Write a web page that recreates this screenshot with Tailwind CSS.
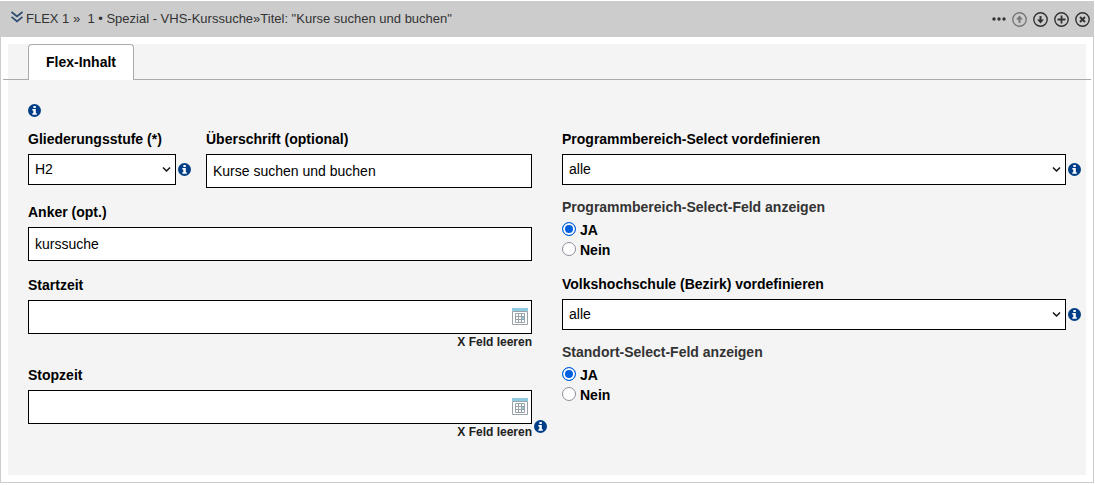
<!DOCTYPE html>
<html lang="de">
  <head>
    <meta charset="UTF-8" />
    <title>Flex-Inhalt</title>
    <meta name="viewport" content="width=device-width, initial-scale=1" />
    <script src="https://cdn.jsdelivr.net/npm/@tailwindcss/browser@4"></script>
  </head>
  <body class="bg-white font-['Liberation_Sans',Arial,sans-serif] text-sm text-black">

    <!-- shared icons -->
    <svg class="hidden">
      <symbol id="info" viewBox="0 0 12 12">
        <circle cx="6" cy="6" r="6" fill="#003f87" />
        <path d="M5 1.800h2.200v1.900H5zM4 4.600h3.200v3.900h.9V10H4V8.500h.9V6H4z" fill="#fff" />
      </symbol>
      <symbol id="calendar" viewBox="0 0 16 17">
        <path d="M0 0h16v3H0z" fill="#8fcbe0" />
        <path d="M.5 3.500h15v13H.5z" fill="#fff" stroke="#98a2a8" />
        <path d="M10 9h2v2h-2z" fill="#8fcbe0" />
        <path d="M3.500 5.500h9v9h-9zM6.500 5.500v9M9.500 5.500v9M3.500 8.500h9M3.500 11.500h9" fill="none" stroke="#98a2a8" />
      </symbol>
    </svg>

    <div class="mt-px mr-px border border-t-0 border-[#ccc]">
      <header class="flex h-9 items-center justify-between bg-[#ccc] pl-[10px] pr-[3px] text-[13px] text-[#333]">
        <div class="flex items-center gap-[3px]">
          <svg class="mb-1 h-3 w-3" viewBox="0 0 12 12" fill="none" stroke="#2b4a6f" stroke-width="1.700">
            <path d="M.5 1L6 5.500 11.500 1M.5 5.800L6 10.300l5.500-4.500" />
          </svg>
          <h1 class="whitespace-pre">FLEX 1 »  1 • Spezial - VHS-Kurssuche»Titel: "Kurse suchen und buchen"</h1>
        </div>
        <div class="flex items-center gap-[6px]">
          <button type="button" aria-label="Mehr">
            <svg class="h-[15px] w-[14px]" viewBox="0 0 14 15" fill="#333">
              <circle cx="2" cy="7" r="1.700" /><circle cx="7" cy="7" r="1.700" /><circle cx="12" cy="7" r="1.700" />
            </svg>
          </button>
          <button type="button" aria-label="Nach oben" class="text-[#777]">
            <svg class="size-[15px]" viewBox="0 0 15 15" fill="none" stroke="currentColor" stroke-width="1.400">
              <circle cx="7.500" cy="7.500" r="6.700" />
              <path d="M7.500 11V5" stroke-width="2" /><path d="M4 7.500L7.500 3.600 11 7.500z" fill="currentColor" stroke="none" />
            </svg>
          </button>
          <button type="button" aria-label="Nach unten">
            <svg class="size-[15px]" viewBox="0 0 15 15" fill="none" stroke="currentColor" stroke-width="1.400">
              <circle cx="7.500" cy="7.500" r="6.700" />
              <path d="M7.500 4v6" stroke-width="2" /><path d="M4 7.500l3.500 3.900L11 7.500z" fill="currentColor" stroke="none" />
            </svg>
          </button>
          <button type="button" aria-label="Hinzufügen">
            <svg class="size-[15px]" viewBox="0 0 15 15" fill="none" stroke="currentColor" stroke-width="1.400">
              <circle cx="7.500" cy="7.500" r="6.700" />
              <path d="M7.500 3.500v8M3.500 7.500h8" stroke-width="1.800" />
            </svg>
          </button>
          <button type="button" aria-label="Löschen">
            <svg class="size-[15px]" viewBox="0 0 15 15" fill="none" stroke="currentColor" stroke-width="1.400">
              <circle cx="7.500" cy="7.500" r="6.700" />
              <path d="M5 5l5 5M10 5l-5 5" stroke-width="2" />
            </svg>
          </button>
        </div>
      </header>

      <div class="mx-[7px] mt-[7px] mb-[7px] bg-[#f4f4f4]">
        <nav class="-mx-[5px] flex border-b border-[#aaa] pl-[25px]">
          <a href="#flex" class="-mb-px rounded-t border border-b-0 border-[#aaa] bg-white px-[17px] pt-[7px] pb-2 leading-5 font-bold">Flex-Inhalt</a>
        </nav>

        <form id="flex" class="pt-6 pb-[35px] pl-5">
          <svg class="mb-3 size-[13px]"><use href="#info" /></svg>

          <div class="grid grid-cols-2 gap-[10px]">
            <div>
              <div class="mb-[14px] flex pr-5">
                <div class="w-[178px]">
                  <label for="stufe" class="mb-[5px] block leading-5 font-bold">Gliederungsstufe (*)</label>
                  <div class="flex items-center gap-[2px]">
                    <div class="relative w-[148px]">
                      <select id="stufe" class="block h-[31px] w-full appearance-none border border-black bg-white px-[6px] pb-[2px]">
                        <option>H2</option>
                      </select>
                      <svg class="pointer-events-none absolute top-3 right-[5px] h-[7px] w-[9px]" viewBox="0 0 9 7" fill="none" stroke="#111" stroke-width="1.500"><path d="M1 1.500l3.500 3.500L8 1.500" /></svg>
                    </div>
                    <svg class="size-[13px]"><use href="#info" /></svg>
                  </div>
                </div>
                <div class="flex-1">
                  <label for="titel" class="mb-[5px] block leading-5 font-bold">Überschrift (optional)</label>
                  <input id="titel" type="text" value="Kurse suchen und buchen" class="block h-[34px] w-full border border-black bg-white px-[6px]" />
                </div>
              </div>

              <div class="mb-[14px] pr-5">
                <label for="anker" class="mb-[5px] block leading-5 font-bold">Anker (opt.)</label>
                <input id="anker" type="text" value="kurssuche" class="block h-[34px] w-full border border-black bg-white px-[6px]" />
              </div>

              <div class="mb-[15px] pr-5">
                <label for="start" class="mb-[5px] block leading-5 font-bold">Startzeit</label>
                <div class="relative">
                  <input id="start" type="text" class="block h-[34px] w-full border border-black bg-white px-[6px]" />
                  <svg class="absolute top-2 right-1 h-[17px] w-4"><use href="#calendar" /></svg>
                </div>
                <button type="button" class="ml-auto block text-xs font-bold text-[#222]">X Feld leeren</button>
              </div>

              <div>
                <label for="stop" class="mb-[5px] block leading-5 font-bold">Stopzeit</label>
                <div class="relative mr-5">
                  <input id="stop" type="text" class="block h-[34px] w-full border border-black bg-white px-[6px]" />
                  <svg class="absolute top-2 right-1 h-[17px] w-4"><use href="#calendar" /></svg>
                </div>
                <div class="flex items-start justify-end gap-[2px] pr-[5px]">
                  <button type="button" class="block text-xs font-bold text-[#222]">X Feld leeren</button>
                  <svg class="-mt-1 size-[13px]"><use href="#info" /></svg>
                </div>
              </div>
            </div>

            <div>
              <label for="bereich" class="mb-[5px] block leading-5 font-bold">Programmbereich-Select vordefinieren</label>
              <div class="mb-3 flex items-center gap-[2px] pr-[5px]">
                <div class="relative flex-1">
                  <select id="bereich" class="block h-[31px] w-full appearance-none border border-black bg-white px-[6px] pb-[2px]">
                    <option>alle</option>
                  </select>
                  <svg class="pointer-events-none absolute top-3 right-[5px] h-[7px] w-[9px]" viewBox="0 0 9 7" fill="none" stroke="#111" stroke-width="1.500"><path d="M1 1.500l3.500 3.500L8 1.500" /></svg>
                </div>
                <svg class="size-[13px]"><use href="#info" /></svg>
              </div>

              <fieldset class="mb-[14px]">
                <legend class="mb-[3px] leading-5 font-bold text-[#333]">Programmbereich-Select-Feld anzeigen</legend>
                <label class="flex h-5 items-start gap-1 leading-5 font-bold">
                  <input type="radio" name="bereich-feld" checked class="mt-[2px] size-[14px] appearance-none rounded-full border border-[#8f8f9d] bg-white checked:border-[#0060df] checked:bg-[#0060df] checked:inset-ring-2 checked:inset-ring-white" />
                  JA
                </label>
                <label class="flex h-5 items-start gap-1 leading-5 font-bold">
                  <input type="radio" name="bereich-feld" class="mt-[2px] size-[14px] appearance-none rounded-full border border-[#8f8f9d] bg-white checked:border-[#0060df] checked:bg-[#0060df] checked:inset-ring-2 checked:inset-ring-white" />
                  Nein
                </label>
              </fieldset>

              <label for="vhs" class="mb-[5px] block leading-5 font-bold">Volkshochschule (Bezirk) vordefinieren</label>
              <div class="mb-3 flex items-center gap-[2px] pr-[5px]">
                <div class="relative flex-1">
                  <select id="vhs" class="block h-[31px] w-full appearance-none border border-black bg-white px-[6px] pb-[2px]">
                    <option>alle</option>
                  </select>
                  <svg class="pointer-events-none absolute top-3 right-[5px] h-[7px] w-[9px]" viewBox="0 0 9 7" fill="none" stroke="#111" stroke-width="1.500"><path d="M1 1.500l3.500 3.500L8 1.500" /></svg>
                </div>
                <svg class="size-[13px]"><use href="#info" /></svg>
              </div>

              <fieldset>
                <legend class="mb-[3px] leading-5 font-bold text-[#333]">Standort-Select-Feld anzeigen</legend>
                <label class="flex h-5 items-start gap-1 leading-5 font-bold">
                  <input type="radio" name="standort-feld" checked class="mt-[2px] size-[14px] appearance-none rounded-full border border-[#8f8f9d] bg-white checked:border-[#0060df] checked:bg-[#0060df] checked:inset-ring-2 checked:inset-ring-white" />
                  JA
                </label>
                <label class="flex h-5 items-start gap-1 leading-5 font-bold">
                  <input type="radio" name="standort-feld" class="mt-[2px] size-[14px] appearance-none rounded-full border border-[#8f8f9d] bg-white checked:border-[#0060df] checked:bg-[#0060df] checked:inset-ring-2 checked:inset-ring-white" />
                  Nein
                </label>
              </fieldset>
            </div>
          </div>
        </form>
      </div>
    </div>

  </body>
</html>
